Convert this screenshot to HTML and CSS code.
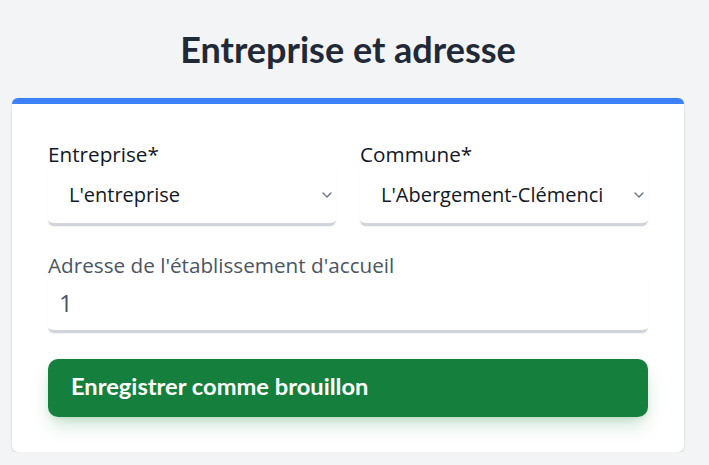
FILE: index.html
```html
<!DOCTYPE html>
<html lang="fr">
<head>
<meta charset="utf-8">
<title>Entreprise et adresse</title>
<link rel="stylesheet" href="styles.css">
</head>
<body>
<main class="container">
  <h1 class="title">Entreprise et adresse</h1>
  <section class="card">
    <div class="grid">
      <div class="field">
        <label class="label">Entreprise*</label>
        <div class="select">
          <span class="select-text">L'entreprise</span>
          <svg class="chevron" width="10" height="6" viewBox="0 0 10 6"><path d="M1 1l4 4 4-4" fill="none" stroke="#6b7280" stroke-width="1.4" stroke-linecap="round" stroke-linejoin="round"/></svg>
        </div>
      </div>
      <div class="field">
        <label class="label">Commune*</label>
        <div class="select">
          <span class="select-text">L'Abergement-Clémenciat</span>
          <svg class="chevron" width="10" height="6" viewBox="0 0 10 6"><path d="M1 1l4 4 4-4" fill="none" stroke="#6b7280" stroke-width="1.4" stroke-linecap="round" stroke-linejoin="round"/></svg>
        </div>
      </div>
    </div>
    <div class="field field-wide">
      <label class="label label-muted">Adresse de l'établissement d'accueil</label>
      <div class="input">1</div>
    </div>
    <button class="button" type="button">Enregistrer comme brouillon</button>
  </section>
</main>
</body>
</html>
```
FILE: styles.css
```css
html, body {
  margin: 0;
  padding: 0;
}
body {
  background: #f3f4f6;
  font-family: "Open Sans", "Noto Sans", sans-serif;
  color: #111827;
}
.container {
  width: 672px;
  margin-left: 12px;
  padding-top: 29px;
}
.title {
  margin: 0;
  text-align: center;
  font-family: Lato, "Open Sans", sans-serif;
  font-size: 36px;
  line-height: 40px;
  font-weight: 700;
  color: #1f2937;
}
.card {
  margin-top: 29px;
  background: #fff;
  border-top: 6px solid #3b82f6;
  border-radius: 6px;
  box-shadow: 0 1px 3px rgba(0,0,0,0.12), 0 1px 2px rgba(0,0,0,0.06);
  padding: 38px 36px 35px;
}
.grid {
  display: grid;
  grid-template-columns: repeat(2, minmax(0, 1fr));
  column-gap: 24px;
}
.field {
  display: flex;
  flex-direction: column;
  min-width: 0;
}
.field-wide {
  margin-top: 27px;
}
.label {
  font-size: 20.7px;
  line-height: 24px;
  color: #111827;
}
.label-muted {
  color: #4b5563;
}
.select {
  height: 57px;
  display: flex;
  align-items: center;
  padding-left: 21px;
  padding-right: 4px;
  background: #fff;
  border-bottom: 3px solid #d1d5db;
  border-radius: 6px;
  box-shadow: 0 1px 2px rgba(0,0,0,0.05);
}
.select-text {
  flex: 1;
  min-width: 0;
  overflow: hidden;
  white-space: nowrap;
  font-size: 20px;
  margin-right: 31px;
}
.chevron {
  flex: none;
  width: 10px;
  height: 6px;
}
.input {
  height: 50px;
  padding-bottom: 3px;
  display: flex;
  align-items: center;
  padding-left: 11px;
  font-size: 24px;
  color: #4b5563;
  background: #fff;
  border-bottom: 3px solid #d1d5db;
  border-radius: 6px;
  box-shadow: 0 1px 2px rgba(0,0,0,0.05);
}
.button {
  display: block;
  width: 100%;
  margin-top: 26px;
  height: 58px;
  padding: 0 23px 4px;
  text-align: left;
  border: none;
  border-radius: 10px;
  background: #15803d;
  color: #fff;
  font-family: Lato, "Open Sans", sans-serif;
  font-size: 23.7px;
  font-weight: 700;
  box-shadow: 0 10px 20px -4px rgba(21,128,61,0.25), 0 4px 8px -4px rgba(21,128,61,0.2);
}
```
